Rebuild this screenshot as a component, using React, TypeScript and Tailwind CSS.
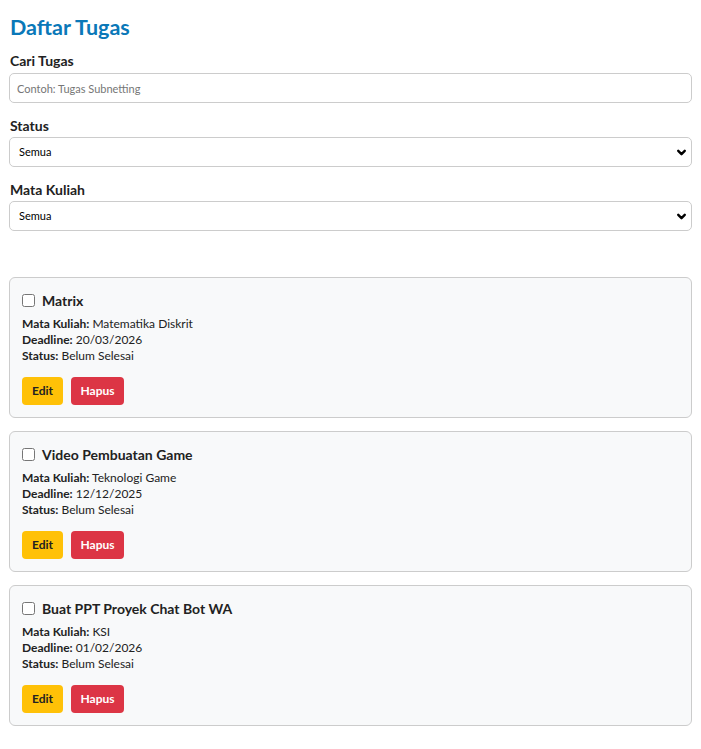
import { ChevronDown } from 'lucide-react';

const tasks = [
  { title: 'Matrix', matkul: 'Matematika Diskrit', deadline: '20/03/2026', status: 'Belum Selesai' },
  { title: 'Video Pembuatan Game', matkul: 'Teknologi Game', deadline: '12/12/2025', status: 'Belum Selesai' },
  { title: 'Buat PPT Proyek Chat Bot WA', matkul: 'KSI', deadline: '01/02/2026', status: 'Belum Selesai' },
];

function SelectBox({ value }: { value: string }) {
  return (
    <div className="relative">
      <select className="w-full h-[30px] appearance-none rounded-[5px] border border-[#cccccc] bg-white pl-[9px] text-[11px] text-black outline-none">
        <option>{value}</option>
      </select>
      <ChevronDown className="pointer-events-none absolute right-[4px] top-[9px] w-[13px] h-[13px] text-black" strokeWidth={4.5} />
    </div>
  );
}

export default function App() {
  return (
    <div className="min-h-screen bg-white pl-[9px] pr-[9px] pt-[11px] pb-6 text-[#222] font-['Lato',sans-serif]">
      <h1 className="text-[21.5px] leading-[29px] font-bold text-[#0a78b8] pt-[2px] mb-[8px] ml-[1px]">Daftar Tugas</h1>

      <div className="space-y-[12px]">
        <div>
          <label className="block text-[14px] leading-[20px] font-bold text-[#222] pt-[1px] mb-[2px] ml-[1px]">Cari Tugas</label>
          <input
            type="text"
            placeholder="Contoh: Tugas Subnetting"
            className="w-full h-[30px] rounded-[5px] border border-[#cccccc] px-[7px] text-[11px] placeholder:text-[#767676] outline-none"
          />
        </div>
        <div>
          <label className="block text-[14px] leading-[20px] font-bold text-[#222] pt-[1px] mb-[1px] ml-[1px]">Status</label>
          <SelectBox value="Semua" />
        </div>
        <div>
          <label className="block text-[14px] leading-[20px] font-bold text-[#222] pt-[1px] mb-[1px] ml-[1px]">Mata Kuliah</label>
          <SelectBox value="Semua" />
        </div>
      </div>

      <div className="mt-[46px] flex flex-col gap-[13px]">
        {tasks.map((task, i) => (
          <div key={i} className="rounded-[6px] border border-[#cccccc] bg-[#f8f9fa] px-[12px] pt-[12px] pb-[12px]">
            <div className="flex items-center gap-[7px] h-[20px]">
              <input type="checkbox" className="w-[13px] h-[13px] m-0" />
              <h3 className="text-[14px] font-bold text-[#222]">{task.title}</h3>
            </div>
            <div className="mt-[6px] text-[12px] leading-[16px] text-[#222]">
              <p><b>Mata Kuliah:</b> {task.matkul}</p>
              <p><b>Deadline:</b> {task.deadline}</p>
              <p><b>Status:</b> {task.status}</p>
            </div>
            <div className="mt-[13px] flex gap-[8px]">
              <button className="h-[28px] w-[41px] rounded-[4px] bg-[#ffc107] text-[12px] font-bold text-[#222]">Edit</button>
              <button className="h-[28px] w-[53px] rounded-[4px] bg-[#dc3545] text-[12px] font-bold text-white">Hapus</button>
            </div>
          </div>
        ))}
      </div>
    </div>
  );
}
